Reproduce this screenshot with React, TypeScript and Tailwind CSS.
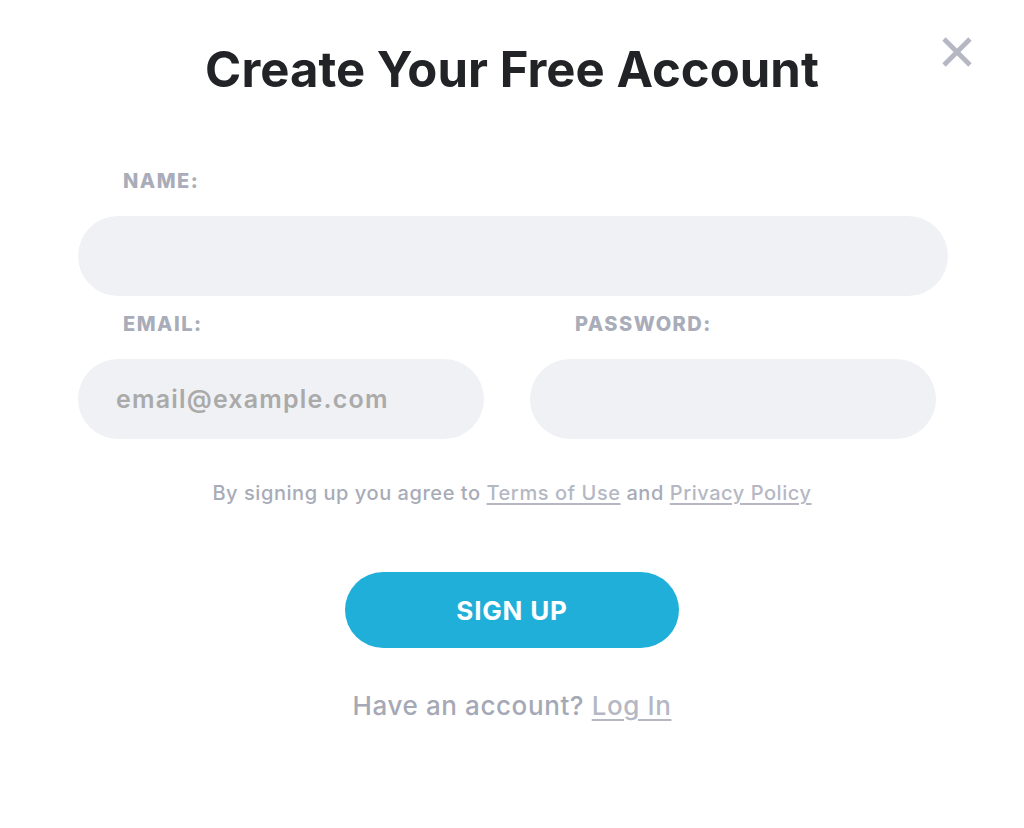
import React from 'react';

const CloseIcon: React.FC = () => (
  <svg width="32" height="32" viewBox="0 0 32 32" fill="none">
    <path d="M3 3L29 29M29 3L3 29" stroke="#b5b8c3" strokeWidth="4.8" strokeLinecap="butt" />
  </svg>
);

const App: React.FC = () => {
  return (
    <div
      className="relative w-[1024px] h-[828px] bg-white overflow-hidden flex flex-col items-center"
      style={{ fontFamily: 'Inter, "Open Sans", sans-serif' }}
    >
      <button className="absolute left-[941px] top-[36px] w-[32px] h-[32px]" aria-label="Close">
        <CloseIcon />
      </button>

      <h1 className="mt-[42px] text-[49px] leading-[56px] font-bold text-[#222326] tracking-[0.05px]">
        Create Your Free Account
      </h1>

      <form className="w-full pl-[78px] flex flex-col" onSubmit={(e) => e.preventDefault()}>
        <label className="mt-[71px] pl-[45px] text-[20px] leading-[24px] font-extrabold text-[#a9acb9] tracking-[1.5px]">
          NAME:
        </label>
        <input
          type="text"
          className="mt-[23px] w-[870px] h-[80px] rounded-full bg-[#f0f1f5] px-[38px] text-[22px] outline-none"
        />

        <div className="mt-[16px] grid grid-cols-[406px_406px] gap-x-[46px]">
          <div className="flex flex-col">
            <label className="pl-[45px] text-[20px] leading-[24px] font-extrabold text-[#a9acb9] tracking-[1.5px]">
              EMAIL:
            </label>
            <input
              type="email"
              placeholder="email@example.com"
              className="mt-[23px] h-[80px] rounded-full bg-[#f0f1f5] px-[38px] text-[25px] font-semibold tracking-[1.2px] text-[#555] placeholder:text-[#aaaaaa] outline-none"
            />
          </div>
          <div className="flex flex-col">
            <label className="pl-[45px] text-[20px] leading-[24px] font-extrabold text-[#a9acb9] tracking-[1.5px]">
              PASSWORD:
            </label>
            <input
              type="password"
              className="mt-[23px] h-[80px] rounded-full bg-[#f0f1f5] px-[38px] text-[22px] outline-none"
            />
          </div>
        </div>
      </form>

      <p className="mt-[40px] text-[20px] leading-[28px] font-medium tracking-[0.55px] text-[#a8abb8]">
        By signing up you agree to{' '}
        <a href="#" className="underline underline-offset-[3px] text-[#b5b8c3]">Terms of Use</a> and{' '}
        <a href="#" className="underline underline-offset-[3px] text-[#b5b8c3]">Privacy Policy</a>
      </p>

      <button className="mt-[65px] w-[334px] h-[76px] rounded-full bg-[#1fafd9] text-white text-[26px] font-bold tracking-[0.8px]">
        SIGN UP
      </button>

      <p className="mt-[42px] text-[26px] leading-[32px] font-medium tracking-[0.6px] text-[#a5a8b5]">
        Have an account?{' '}
        <a href="#" className="underline underline-offset-[4px] text-[#b5b8c3]">Log In</a>
      </p>
    </div>
  );
};

export default App;
